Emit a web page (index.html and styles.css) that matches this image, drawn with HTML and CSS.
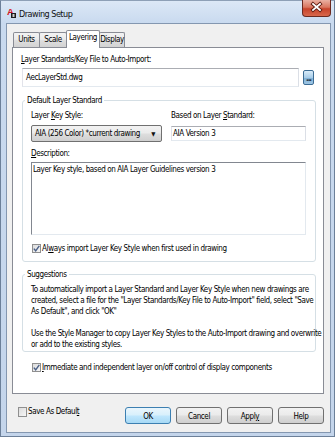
FILE: index.html
```html
<!DOCTYPE html>
<html lang="en">

<head>
    <meta charset="utf-8">
    <title>Drawing Setup</title>
    <link rel="stylesheet" href="styles.css">
</head>

<body>
    <div class="window">
        <!-- titelbar med ikon og luk-knap -->
        <div class="titlebar">
            <svg class="appicon" width="9" height="11" viewBox="0 0 9 11">
                <text x="0" y="8" fill="#d3141c" font-size="9.5" font-weight="bold" font-family="Liberation Sans, sans-serif">A</text>
                <rect x="4" y="6" width="5" height="5" fill="#1d1d1d" />
                <rect x="5.5" y="7" width="2" height="3" fill="#cfcfcf" />
            </svg>
            <span class="title">Drawing Setup</span>
            <div class="close">
                <svg width="29" height="17" viewBox="0 0 29 17">
                    <path d="M11 5 L18 11 M18 5 L11 11" stroke="#5b1b10" stroke-width="3.6" stroke-linecap="square" />
                    <path d="M11 5 L18 11 M18 5 L11 11" stroke="#ffffff" stroke-width="1.8" stroke-linecap="square" />
                </svg>
            </div>
        </div>

        <div class="client">
            <!-- faner -->
            <div class="tabs">
                <div class="tab t-units">Units</div>
                <div class="tab t-scale">Scale</div>
                <div class="tab valgt t-layer">Layering</div>
                <div class="tab t-display">Display</div>
            </div>

            <div class="panel">
                <div class="label"><u>L</u>ayer Standards/Key File to Auto-Import:</div>
                <div class="filerow">
                    <div class="input fileinput">AecLayerStd.dwg</div>
                    <div class="browse">...</div>
                </div>

                <fieldset class="group default-group">
                    <legend>Default Layer Standard</legend>
                    <div class="tworow">
                        <div class="col keycol">
                            <div class="label">Layer <u>K</u>ey Style:</div>
                            <div class="select">
                                <span>AIA (256 Color) *current drawing</span>
                                <span class="arrow">&#9660;</span>
                            </div>
                        </div>
                        <div class="col basecol">
                            <div class="label">Based on Layer <u>S</u>tandard:</div>
                            <div class="input baseinput">AIA Version 3</div>
                        </div>
                    </div>
                    <div class="label desclabel"><u>D</u>escription:</div>
                    <div class="textarea">Layer Key style, based on AIA Layer Guidelines version 3</div>
                    <div class="checkrow alwaysrow">
                        <span class="check on">
                            <svg width="7" height="7" viewBox="0 0 7 7"><path d="M0.8 3.6 L2.7 5.8 L6.3 0.8" fill="none" stroke="#4a5f86" stroke-width="1.4" /></svg>
                        </span>
                        <span>Al<u>w</u>ays import Layer Key Style when first used in drawing</span>
                    </div>
                </fieldset>

                <fieldset class="group suggest-group">
                    <legend>Suggestions</legend>
                    <p class="tip">To automatically import a Layer Standard and Layer Key Style when new drawings are<br>created, select a file for the "Layer Standards/Key File to Auto-Import" field, select "Save<br>As Default", and click "OK"</p>
                    <p class="tip tip2">Use the Style Manager to copy Layer Key Styles to the Auto-Import drawing and overwrite<br>or add to the existing styles.</p>
                </fieldset>

                <div class="checkrow immrow">
                    <span class="check on">
                        <svg width="7" height="7" viewBox="0 0 7 7"><path d="M0.8 3.6 L2.7 5.8 L6.3 0.8" fill="none" stroke="#4a5f86" stroke-width="1.4" /></svg>
                    </span>
                    <span><u>I</u>mmediate and independent layer on/off control of display components</span>
                </div>
            </div>

            <!-- bund med knapper -->
            <div class="footer">
                <div class="checkrow saverow">
                    <span class="check"></span>
                    <span>Save As Defaul<u>t</u></span>
                </div>
                <div class="buttons">
                    <div class="btn default">OK</div>
                    <div class="btn">Cancel</div>
                    <div class="btn">Appl<u>y</u></div>
                    <div class="btn">Help</div>
                </div>
            </div>
        </div>
    </div>
</body>

</html>
```

FILE: styles.css
```css
body {
    margin: 0;
    padding: 0;
    font-family: "Liberation Sans Narrow", "DejaVu Sans Condensed", sans-serif;
    font-size: 8px;
    letter-spacing: -0.4px;
    line-height: 11px;
    color: #000;
}

u {
    text-decoration-thickness: 1px;
    text-underline-offset: 1px;
}

.window {
    width: 335px;
    height: 437px;
    box-sizing: border-box;
    border: 1px solid #6c8099;
    border-top-color: #8ea0b6;
    background: linear-gradient(#dce8f6, #c9daef 22px, #c4d5eb);
    padding: 0 3px 3px 5px;
    display: flex;
    flex-direction: column;
}

/* titelbar */
.titlebar {
    height: 22px;
    display: flex;
    align-items: flex-start;
    flex: none;
}

.appicon {
    margin: 6px 0 0 1px;
}

.title {
    font-size: 9px;
    letter-spacing: -0.5px;
    line-height: 12px;
    margin: 7px 0 0 3px;
    color: #111;
}

.close {
    margin-left: auto;
    margin-top: -1px;
    width: 29px;
    height: 17px;
    box-sizing: border-box;
    border: 1px solid #6b2a20;
    border-top: none;
    border-radius: 0 0 4px 4px;
    background: linear-gradient(#eab0a2, #d9765f 45%, #c7432b 55%, #d8684c);
    overflow: hidden;
}

.close svg {
    display: block;
    margin: -1px 0 0 -1px;
}

/* klient-omraade */
.client {
    flex: 1;
    border: 1px solid #8497b0;
    background-color: #f0f0f0;
    padding: 6px 6px 0 5px;
    display: flex;
    flex-direction: column;
}

.tabs {
    display: flex;
    align-items: flex-end;
    margin-left: 1px;
    margin-bottom: -1px;
    position: relative;
    z-index: 1;
}

.tab {
    height: 15px;
    box-sizing: border-box;
    border: 1px solid #898c95;
    border-bottom: none;
    border-radius: 2px 2px 0 0;
    background: linear-gradient(#f3f3f3, #ebebeb 45%, #dddddd 55%, #d3d3d3);
    text-align: center;
    line-height: 13px;
    margin-bottom: 1px;
    margin-right: -1px;
}

.t-units {
    width: 27px;
}

.t-scale {
    width: 28px;
}

.t-layer {
    width: 34px;
}

.t-display {
    width: 26px;
}

.tab.valgt {
    height: 18px;
    background: #fff;
    margin-bottom: 0;
    line-height: 14px;
    position: relative;
    z-index: 2;
}

.panel {
    height: 347px;
    flex: none;
    box-sizing: border-box;
    border: 1px solid #898c95;
    background-color: #fff;
    padding: 6px 7px 0 8px;
}

.filerow {
    display: flex;
    align-items: center;
    margin: 3px 0 0 1px;
}

.input {
    box-sizing: border-box;
    border: 1px solid #abadb3;
    border-left-color: #e2e3ea;
    border-right-color: #dbdfe6;
    border-bottom-color: #e3e9ef;
    background: #fff;
    white-space: nowrap;
}

.fileinput {
    width: 277px;
    height: 19px;
    padding: 3px 0 0 3px;
}

.browse {
    width: 11px;
    height: 15px;
    margin-left: 4px;
    box-sizing: border-box;
    border: 1px solid #3c6c94;
    border-radius: 2px;
    background: linear-gradient(#d9ecf9, #a8cde9 50%, #7fb0d6 51%, #9ec6e4);
    color: #1a2a3a;
    font-weight: bold;
    font-size: 8px;
    line-height: 16px;
    text-align: center;
    letter-spacing: -1px;
    overflow: hidden;
}

/* gruppe-bokse */
.group {
    margin: 8px 0 0 1px;
    padding: 0 8px 7px 8px;
    border: 1px solid #d5dfe5;
    border-radius: 3px;
    min-width: 0;
}

.group legend {
    padding: 0 2px;
    margin-left: -6px;
    line-height: 11px;
}

.tworow {
    display: flex;
    margin-top: 4px;
}

.keycol {
    width: 131px;
}

.basecol {
    width: 135px;
    margin-left: 9px;
}

.select {
    margin-top: 4px;
    height: 17px;
    box-sizing: border-box;
    border: 1px solid #707070;
    border-radius: 2px;
    background: linear-gradient(#f2f2f2, #ebebeb 45%, #dddddd 55%, #cfcfcf);
    display: flex;
    align-items: center;
    padding: 0 6px 0 3px;
    white-space: nowrap;
}

.arrow {
    margin-left: auto;
    font-size: 6px;
    color: #111;
}

.baseinput {
    margin-top: 5px;
    height: 15px;
    padding: 1px 0 0 1px;
}

.desclabel {
    margin-top: 6px;
}

.textarea {
    margin-top: 3px;
    width: 275px;
    height: 73px;
    box-sizing: border-box;
    border: 1px solid #e3e9ef;
    border-top-color: #828790;
    border-left-color: #828790;
    background: #fff;
    padding: 1px 0 0 1px;
}

.checkrow {
    display: flex;
    align-items: center;
    white-space: nowrap;
}

.check {
    width: 9px;
    height: 9px;
    box-sizing: border-box;
    border: 1px solid #8f8f8f;
    background: linear-gradient(135deg, #dcdcdc, #f6f6f6);
    margin-right: 1px;
    display: flex;
    align-items: center;
    justify-content: center;
    flex: none;
}

.alwaysrow {
    margin: 8px 0 0 1px;
}

.suggest-group {
    margin-top: 7px;
    padding-bottom: 1px;
}

.tip {
    margin: 4px 0 0 0;
    white-space: nowrap;
}

.tip2 {
    margin-top: 11px;
}

.immrow {
    margin: 10px 0 0 11px;
}

/* knapper i bunden */
.footer {
    display: flex;
    align-items: flex-start;
    margin-top: 13px;
}

.saverow {
    margin: -1px 0 0 6px;
}

.saverow .check {
    width: 9px;
    height: 10px;
}

.buttons {
    margin-left: auto;
    display: flex;
    gap: 5px;
}

.btn {
    width: 46px;
    height: 17px;
    box-sizing: border-box;
    border: 1px solid #707070;
    border-radius: 3px;
    background: linear-gradient(#f2f2f2, #ebebeb 45%, #dddddd 55%, #cfcfcf);
    text-align: center;
    line-height: 16px;
    padding-top: 1px;
}

.btn.default {
    border-color: #3c7fb1;
    background: linear-gradient(#eaf6fd, #d9f0fc 45%, #bee6fd 55%, #a7d9f5);
}
```
